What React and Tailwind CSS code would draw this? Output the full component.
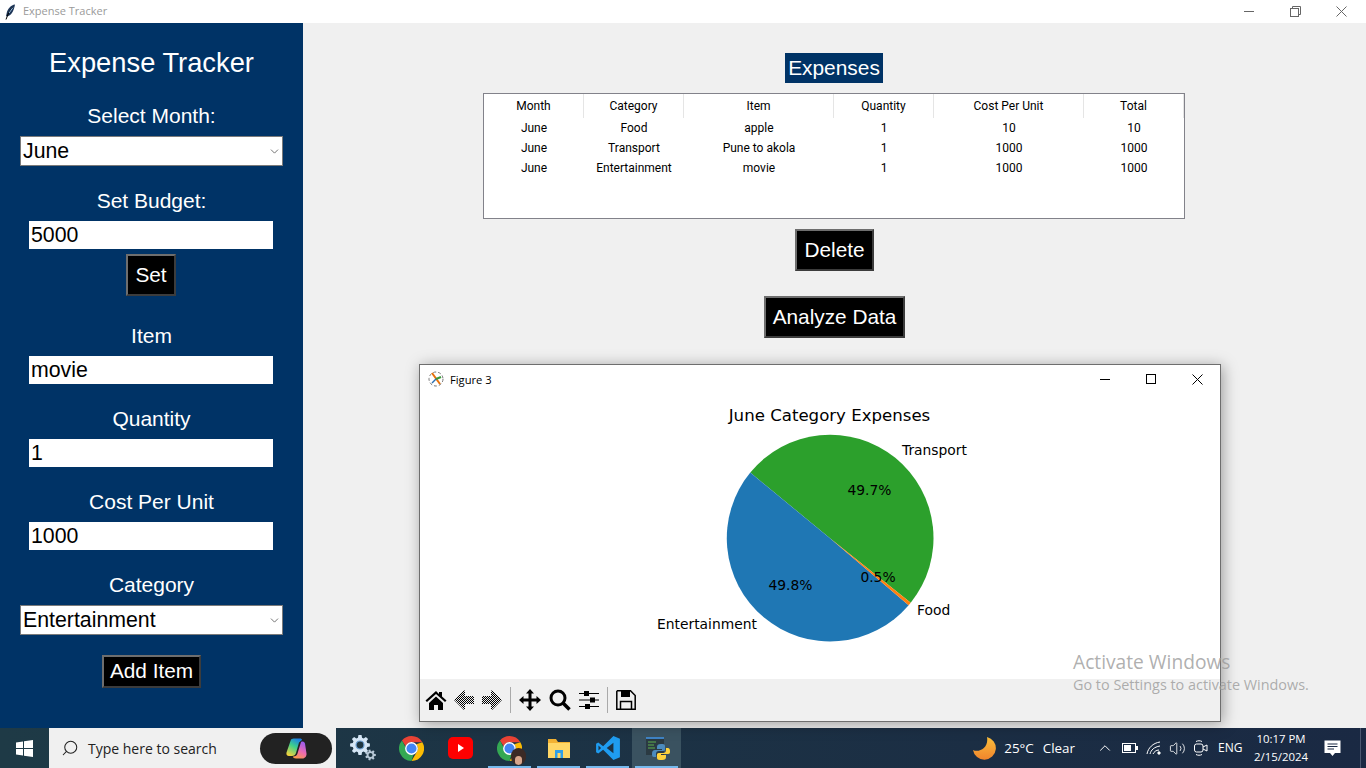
import React from 'react';
import { Search, ChevronDown, ChevronUp, Volume2 } from 'lucide-react';

const columns = ['Month', 'Category', 'Item', 'Quantity', 'Cost Per Unit', 'Total'];
const rows = [
  ['June', 'Food', 'apple', '1', '10', '10'],
  ['June', 'Transport', 'Pune to akola', '1', '1000', '1000'],
  ['June', 'Entertainment', 'movie', '1', '1000', '1000'],
];

const arial = "font-['Liberation_Sans',Arial,sans-serif]";
const segoe = "font-['Open_Sans',sans-serif]";
const roboto = "font-['Roboto',sans-serif]";

const Feather = () => (
  <svg width="11" height="16" viewBox="0 0 11 16">
    <path d="M10 0.5C6 1 2.5 4.5 1.5 10l-0.5 2 1 .5C6 12 9 7 10 0.5Z" fill="#1d3557" />
    <path d="M8 3 3.5 9 1 15.5" stroke="#000" strokeWidth="1" fill="none" />
    <path d="M8 3.5 4 9" stroke="#9cc3e6" strokeWidth="1" fill="none" />
  </svg>
);

const FigureIcon = () => (
  <svg width="16" height="16" viewBox="0 0 16 16">
    <circle cx="8" cy="8" r="7" fill="none" stroke="#777" strokeWidth="1" strokeDasharray="3 2" />
    <path d="M4 2 12 13" stroke="#e8710a" strokeWidth="2" />
    <path d="M8 8 13 6" stroke="#3a9a3a" strokeWidth="2" />
    <path d="M8 8 4 12" stroke="#2a6fb0" strokeWidth="1.5" />
  </svg>
);

const SideButton = ({ children, className }) => (
  <div className={`bg-black text-white border-2 border-t-[#6e6e6e] border-l-[#6e6e6e] border-r-[#3c3c3c] border-b-[#3c3c3c] flex items-center justify-center text-[20.8px] ${className}`}>
    {children}
  </div>
);

const Combo = ({ value }) => (
  <div className="w-[263px] h-[30px] bg-white border border-[#7a7a7a] flex items-center justify-between pl-[2px] pr-[1px] text-[21.3px] text-black">
    <span className="pt-[2px]">{value}</span>
    <ChevronDown className="w-[13px] h-[13px] text-[#555]" strokeWidth={1.5} />
  </div>
);

const Entry = ({ value }) => (
  <div className="w-[244px] h-[28px] mr-[1px] pt-[2px] bg-white flex items-center pl-[2px] text-[21.3px] text-black">{value}</div>
);

const Field = ({ label, children, className = 'mt-[23px]' }) => (
  <div className={`${className} flex flex-col items-center gap-2`}>
    <div className="h-6 flex items-center text-[21px] text-white whitespace-nowrap">{label}</div>
    {children}
  </div>
);

const Sidebar = () => (
  <div className={`${arial} w-[303px] shrink-0 h-full bg-[#003366] flex flex-col items-center pt-[23px]`}>
    <div className="h-8 pt-[2px] flex items-center text-[27.3px] text-white">Expense Tracker</div>
    <Field label="Select Month:" className="mt-[26px]"><Combo value="June" /></Field>
    <Field label="Set Budget:"><Entry value="5000" /></Field>
    <SideButton className="w-[50px] h-[42px] mt-[5px] mr-[1px]">Set</SideButton>
    <Field label="Item" className="mt-[28px]"><Entry value="movie" /></Field>
    <Field label="Quantity"><Entry value="1" /></Field>
    <Field label="Cost Per Unit"><Entry value="1000" /></Field>
    <Field label="Category"><Combo value="Entertainment" /></Field>
    <SideButton className="w-[99px] h-[33px] mt-[20px] pb-[2px]">Add Item</SideButton>
  </div>
);

const ExpenseTable = () => (
  <div className={`${roboto} mt-[10px] mr-[1px] w-[702px] h-[126px] bg-white border border-[#82828a] text-[12px] text-black`}>
    <div className="grid grid-cols-[100px_100px_150px_100px_150px_100px]">
      {columns.map((c) => (
        <div key={c} className="h-6 flex items-center justify-center border-r border-[#e5e5e5]">{c}</div>
      ))}
    </div>
    {rows.map((r, i) => (
      <div key={i} className="grid grid-cols-[100px_100px_150px_100px_150px_100px]">
        {r.map((v, j) => (
          <div key={j} className="h-5 flex items-center justify-center">{v}</div>
        ))}
      </div>
    ))}
  </div>
);

const MainPanel = () => (
  <div className={`${arial} flex-1 h-full bg-[#f0f0f0] flex flex-col items-center pt-[30px]`}>
    <div className="w-[98px] h-[30px] mr-[1px] bg-[#003366] text-white text-[20.9px] flex items-center justify-center">Expenses</div>
    <ExpenseTable />
    <SideButton className="w-[79px] h-[42px] mt-[10px]">Delete</SideButton>
    <SideButton className="w-[141px] h-[42px] mt-[25px]">Analyze Data</SideButton>
  </div>
);

const PieChart = () => (
  <svg className="w-full h-full" viewBox="420 393 800 286" fontFamily="'DejaVu Sans', sans-serif" fontSize="13.85" fill="#000">
    <path d="M830 538.3 L910.73 602.75 A103.3 103.3 0 0 0 750.29 472.59 Z" fill="#2ca02c" />
    <path d="M830 538.3 L750.29 472.59 A103.3 103.3 0 0 0 908.66 605.25 Z" fill="#1f77b4" />
    <path d="M830 538.3 L908.66 605.25 A103.3 103.3 0 0 0 910.73 602.75 Z" fill="#ff7f0e" />
    <text x="829.5" y="421" fontSize="16.6" textAnchor="middle">June Category Expenses</text>
    <text x="902" y="455">Transport</text>
    <text x="917" y="615">Food</text>
    <text x="657" y="629">Entertainment</text>
    <text x="869.5" y="495" textAnchor="middle">49.7%</text>
    <text x="790.5" y="590" textAnchor="middle">49.8%</text>
    <text x="878" y="582" textAnchor="middle">0.5%</text>
  </svg>
);

const ToolBtn = ({ children }) => <div className="w-7 h-7 flex items-center justify-center">{children}</div>;

const Arrow = ({ flip, id }) => (
  <svg width="20" height="20" viewBox="0 0 20 20" style={{ transform: flip ? 'scaleX(-1)' : undefined }}>
    <defs>
      <pattern id={id} width="2" height="2" patternUnits="userSpaceOnUse">
        <rect width="1" height="1" fill="#000" />
        <rect x="1" y="1" width="1" height="1" fill="#000" />
      </pattern>
    </defs>
    <path d="M10 0 0 10l10 10 1-1v-5h9V6h-9V1Z" fill={`url(#${id})`} />
  </svg>
);

const FigureToolbar = () => (
  <div className="h-[42px] bg-[#f0f0f0] flex items-center pl-[2px]">
    <ToolBtn>
      <svg width="22" height="20" viewBox="0 0 22 20"><path d="M11 1 0.5 10.5l1.500 1.500L11 4l9 8 1.500-1.500L17 6.500V2h-3v2ZM4 13v7h5v-5h4v5h5v-7l-7-6.500Z" fill="#000" /></svg>
    </ToolBtn>
    <ToolBtn><Arrow id="dither-a" /></ToolBtn>
    <ToolBtn><Arrow id="dither-b" flip /></ToolBtn>
    <div className="w-px h-[26px] bg-[#aaa] ml-[4px] mr-[5px]" />
    <ToolBtn>
      <svg width="24" height="24" viewBox="0 0 24 24"><path d="M12 1 16 5.500H13.500V10.500H18.500V8L23 12 18.500 16V13.500H13.500V18.500H16L12 23 8 18.500H10.500V13.500H5.500V16L1 12 5.500 8V10.500H10.500V5.500H8Z" fill="#000" /></svg>
    </ToolBtn>
    <div className="ml-[2px]">
      <ToolBtn>
        <svg width="22" height="22" viewBox="0 0 22 22"><circle cx="9" cy="9" r="7" fill="none" stroke="#000" strokeWidth="3" /><path d="M14 14 20.500 20.500" stroke="#000" strokeWidth="3.500" /></svg>
      </ToolBtn>
    </div>
    <div className="ml-[1px]">
      <ToolBtn>
        <svg width="20" height="20" viewBox="0 0 20 20"><path d="M0 3.500H20M0 10H20M0 16.500H20" stroke="#000" strokeWidth="1.200" /><rect x="5" y="1" width="5" height="5" /><rect x="11" y="7.500" width="5" height="5" /><rect x="6" y="14" width="5" height="5" /></svg>
      </ToolBtn>
    </div>
    <div className="w-px h-[26px] bg-[#aaa] ml-[4px] mr-[4px]" />
    <ToolBtn>
      <svg width="20" height="20" viewBox="0 0 20 20"><path d="M1.500 0.800H14.500L19.200 5.500V19.200H0.800V1.500Z" fill="none" stroke="#000" strokeWidth="1.500" /><rect x="5" y="1" width="9" height="6" /><path d="M4.500 19V11.500H15.500V19" fill="none" stroke="#000" strokeWidth="1.500" /></svg>
    </ToolBtn>
  </div>
);

const FigureWindow = () => (
  <div className="absolute left-[419px] top-[364px] w-[802px] h-[358px] bg-white border border-[#6e6e6e] shadow-[2px_2px_14px_rgba(0,0,0,0.35)] flex flex-col">
    <div className={`${segoe} h-[28px] flex items-center justify-between text-[11.2px] text-black`}>
      <div className="flex items-center gap-[6px] pl-[8px]"><FigureIcon /><span className="mt-[2px]">Figure 3</span></div>
      <div className="flex items-center">
        <div className="w-[46px] flex justify-center"><div className="w-[10px] h-px bg-black" /></div>
        <div className="w-[46px] flex justify-center"><div className="w-[10px] h-[10px] border border-black" /></div>
        <div className="w-[46px] flex justify-center">
          <svg width="11" height="11" viewBox="0 0 11 11"><path d="M0.500 0.500 10.500 10.500M10.500 0.500 0.500 10.500" stroke="#000" /></svg>
        </div>
      </div>
    </div>
    <div className="flex-1 min-h-0"><PieChart /></div>
    <FigureToolbar />
  </div>
);

const Chrome = ({ size = 25 }) => (
  <svg width={size} height={size} viewBox="0 0 24 24">
    <path d="M12 0a12 12 0 0 1 10.400 6H12a6 6 0 0 0-5.600 3.800L2.800 4.400A12 12 0 0 1 12 0Z" fill="#ea4335" />
    <path d="M22.400 6A12 12 0 0 1 12 24l5.200-9A6 6 0 0 0 16.500 8Z" fill="#fbbc04" />
    <path d="M12 24A12 12 0 0 1 2.800 4.400L7 12a6 6 0 0 0 7 5.500Z" fill="#34a853" />
    <circle cx="12" cy="12" r="5.500" fill="#4285f4" stroke="#fff" strokeWidth="1.300" />
  </svg>
);

const TaskSlot = ({ children, open, active }) => (
  <div className={`relative w-[49px] h-10 flex items-center justify-center ${active ? 'bg-[#3a5260]' : ''}`}>
    {children}
    {open && <div className="absolute bottom-0 left-[3px] right-[3px] h-[2px] bg-[#76b9ed]" />}
  </div>
);

const gearTeeth = (cx, cy, r1, r2, n) => {
  let d = '';
  for (let i = 0; i < n; i++) {
    const a = (i * 2 * Math.PI) / n;
    const w = Math.PI / n / 2;
    const pts = [[r1, a - w * 1.4], [r2, a - w * 0.8], [r2, a + w * 0.8], [r1, a + w * 1.4]];
    pts.forEach(([r, t], k) => {
      d += `${i === 0 && k === 0 ? 'M' : 'L'}${(cx + r * Math.cos(t)).toFixed(2)} ${(cy + r * Math.sin(t)).toFixed(2)} `;
    });
  }
  return d + 'Z';
};

const Gears = () => (
  <svg width="26" height="26" viewBox="0 0 26 26">
    <path d={gearTeeth(10, 10, 7.5, 10, 8)} fill="#d5e6f5" />
    <circle cx="10" cy="10" r="4" fill="#1e3642" stroke="#6fa3d6" strokeWidth="1.2" />
    <path d={gearTeeth(20.5, 20, 3.8, 5.4, 7)} fill="#b8c9d8" />
    <circle cx="20.500" cy="20" r="2" fill="#1e3642" />
  </svg>
);

const Copilot = () => (
  <svg width="24" height="24" viewBox="0 0 24 24">
    <defs>
      <linearGradient id="cp-a" x1="0.7" y1="0" x2="0.2" y2="1">
        <stop offset="0" stopColor="#1a7fe8" /><stop offset="0.45" stopColor="#3fd08a" /><stop offset="1" stopColor="#f8d33a" />
      </linearGradient>
      <linearGradient id="cp-b" x1="0.7" y1="0" x2="0.3" y2="1">
        <stop offset="0" stopColor="#9a5cf0" /><stop offset="0.55" stopColor="#ee6bb0" /><stop offset="1" stopColor="#fb9a4a" />
      </linearGradient>
    </defs>
    <path d="M7 2.500C8 1.500 9 1.500 11 1.500h5c1 0 2 .500 2 1.500L15 5.500 12 16c-.500 2-2 3-4 3H5c-2 0-3-1.500-2.500-3.500Z" fill="url(#cp-a)" />
    <path d="M17 5c2-1 3.500 0 4 1.500l1.500 10c.300 2.500-1.500 5-4 5H12c-2 0-3-1-3-2 2.500 0 4-1 4.500-3Z" fill="url(#cp-b)" />
  </svg>
);

const LeftTaskbar = () => (
  <div className="flex items-center h-10">
    <div className="w-[49px] flex justify-center">
      <svg width="17" height="17" viewBox="0 0 17 17" fill="#fff"><path d="M0 2.400 7 1.400V8H0ZM8 1.200 17 0V8H8ZM0 9H7V15.600L0 14.600ZM8 9H17V17L8 15.800Z" /></svg>
    </div>
    <div className={`${segoe} w-[287px] h-10 bg-[#f0f0f0] flex items-center pl-[12px] text-[14px] text-[#222] relative`}>
      <Search className="w-[18px] h-[18px] -scale-x-100 text-[#222]" strokeWidth={1.4} />
      <span className="ml-[9px]">Type here to search</span>
      <div className="absolute left-[211px] top-[5px] w-[72px] h-[31px] rounded-full bg-[#222] flex items-center justify-center">
        <Copilot />
      </div>
    </div>
    <div className="flex ml-[2px]">
      <TaskSlot><Gears /></TaskSlot>
      <TaskSlot><Chrome /></TaskSlot>
      <TaskSlot>
        <svg width="25" height="22" viewBox="0 0 25 22"><rect width="25" height="22" rx="5" fill="#f00" /><path d="M10 7 16 11 10 15Z" fill="#fff" /></svg>
      </TaskSlot>
      <TaskSlot open>
        <div className="relative w-[25px] h-[25px]">
          <Chrome />
          <div className="absolute right-[-4px] bottom-[-4px] w-[15px] h-[17px] rounded-full bg-[#3b2a26] flex items-end justify-center overflow-hidden">
            <div className="w-[7px] h-[9px] rounded-full bg-[#d7a58c]" />
          </div>
        </div>
      </TaskSlot>
      <TaskSlot open>
        <svg width="24" height="24" viewBox="0 0 24 24">
          <path d="M1 3h8l2 3h12v16H1Z" fill="#f2b233" />
          <rect x="1" y="7" width="22" height="15" fill="#ffd766" />
          <rect x="8" y="14" width="8" height="8" fill="#2f9fe8" />
          <rect x="10.500" y="17" width="3" height="5" fill="#ffd766" />
        </svg>
      </TaskSlot>
      <TaskSlot open>
        <svg width="26" height="26" viewBox="0 0 24 24">
          <path fillRule="evenodd" d="M17 1 7.500 10.300 3 7 1 8v8l2 1 4.500-3.300L17 23l6-2.500v-17ZM17 7.200v9.600L10.800 12ZM3.200 9.600 5.600 12 3.200 14.400Z" fill="#1f9cf0" />
        </svg>
      </TaskSlot>
      <TaskSlot open active>
        <svg width="26" height="26" viewBox="0 0 26 26">
          <rect x="2" y="2" width="18" height="18" fill="#2b3a42" />
          <rect x="2" y="2" width="18" height="2" fill="#3f83c4" />
          <path d="M4 7h8M4 10h6M4 13h7" stroke="#5fb04f" strokeWidth="1" />
          <path d="M17 9c-3 0-4 1-4 3v2h5v1h-7c-2 0-3 1-3 4s1 3 3 3h1v-3c0-2 1-3 3-3h4c2 0 2-1 2-2v-3c0-2-2-2-4-2Z" fill="#4b8bbe" />
          <path d="M18 25c3 0 4-1 4-3v-2h-5v-1h7c2 0 2-1 2-3s-1-3-2-3h-2v2c0 2-1 3-3 3h-4c-2 0-2 1-2 2v3c0 2 2 2 5 2Z" fill="#ffd43b" />
        </svg>
      </TaskSlot>
    </div>
  </div>
);

const Tray = () => (
  <div className={`${segoe} ml-auto flex items-center h-10 text-white text-[13.4px]`}>
    <svg width="24" height="24" viewBox="0 0 24 24">
      <defs><linearGradient id="moon" x1="0" y1="0" x2="0" y2="1"><stop offset="0" stopColor="#fbbf3c" /><stop offset="1" stopColor="#f0842c" /></linearGradient></defs>
      <path d="M15 1a11.500 11.500 0 1 1-14 13c6 3 16-2 14-13Z" fill="url(#moon)" />
    </svg>
    <span className="ml-[8px]">25°C</span>
    <span className="ml-[9px] mr-[21px]">Clear</span>
    <ChevronUp className="w-[18px] h-[18px]" strokeWidth={1.3} />
    <svg className="ml-[8px]" width="16" height="10" viewBox="0 0 16 10"><rect x="0.500" y="0.500" width="13" height="9" fill="none" stroke="#fff" /><rect x="2" y="2" width="7" height="6" fill="#fff" /><rect x="14" y="3" width="2" height="4" fill="#fff" /></svg>
    <svg className="ml-[8px]" width="16" height="14" viewBox="0 0 16 14" fill="none" stroke="#fff" strokeWidth="1"><path d="M1 13C2 7 7 2 14 1" /><path d="M4 13C5 9 8 6 14 5" /><path d="M7 13C8 11 10 9 13 9" /><circle cx="13" cy="12" r="1.200" fill="#fff" /></svg>
    <Volume2 className="ml-[7px] w-[17px] h-[17px]" strokeWidth={1.2} />
    <svg className="ml-[7px]" width="15" height="18" viewBox="0 0 15 18" fill="none" stroke="#fff" strokeWidth="1"><rect x="1.500" y="5" width="8.500" height="8" rx="2" /><path d="M10 8l4-2v6l-4-2M3 2.500c2-1 4-1 6 0M3 15.500c2 1 4 1 6 0" /></svg>
    <span className="ml-[10px] text-[12px] w-[24px]">ENG</span>
    <div className="ml-[1px] w-[76px] flex flex-col items-center text-[11.4px] leading-[18px]">
      <span>10:17 PM</span>
      <span>2/15/2024</span>
    </div>
    <svg className="ml-[5px]" width="17" height="17" viewBox="0 0 17 17"><path d="M0.500 0.500H16.500V13H11L8.500 16 6 13H0.500Z" fill="#fff" /><path d="M3.500 4H13.500M3.500 6.500H13.500M3.500 9H10" stroke="#1a2943" /></svg>
    <div className="ml-[19px] w-px h-10 bg-[#4a5870]" />
    <div className="w-[5px]" />
  </div>
);

const Watermark = () => (
  <div className={`${segoe} absolute left-[1073px] top-[649px] text-[#9a9a9a]/80 pointer-events-none`}>
    <div className="text-[19.2px] leading-[25px]">Activate Windows</div>
    <div className="text-[14.4px] leading-[20px] mt-[1px] whitespace-nowrap">Go to Settings to activate Windows.</div>
  </div>
);

export default function App() {
  return (
    <div className="relative w-full h-screen overflow-hidden flex flex-col bg-[#f0f0f0]">
      <div className={`${segoe} h-[23px] shrink-0 bg-white flex items-center justify-between`}>
        <div className="flex items-center pl-[5px]">
          <Feather />
          <span className="ml-[7px] text-[11px] text-[#9a9a9a]">Expense Tracker</span>
        </div>
        <div className="flex items-center text-[#555]">
          <div className="w-[46px] flex justify-center"><div className="w-[10px] h-px bg-[#666]" /></div>
          <div className="w-[46px] flex justify-center">
            <svg width="11" height="11" viewBox="0 0 11 11" fill="none" stroke="#666"><rect x="0.500" y="2.500" width="8" height="8" /><path d="M2.500 2.500V0.500H10.500V8.500H8.500" /></svg>
          </div>
          <div className="w-[46px] flex justify-center">
            <svg width="11" height="11" viewBox="0 0 11 11"><path d="M0.500 0.500 10.500 10.500M10.500 0.500 0.500 10.500" stroke="#666" /></svg>
          </div>
          <div className="w-[2px]" />
        </div>
      </div>
      <div className="flex-1 min-h-0 flex">
        <Sidebar />
        <MainPanel />
      </div>
      <div className="h-10 shrink-0 flex bg-linear-to-r from-[#1e3a46] to-[#1a2943]">
        <LeftTaskbar />
        <Tray />
      </div>
      <FigureWindow />
      <Watermark />
    </div>
  );
}
